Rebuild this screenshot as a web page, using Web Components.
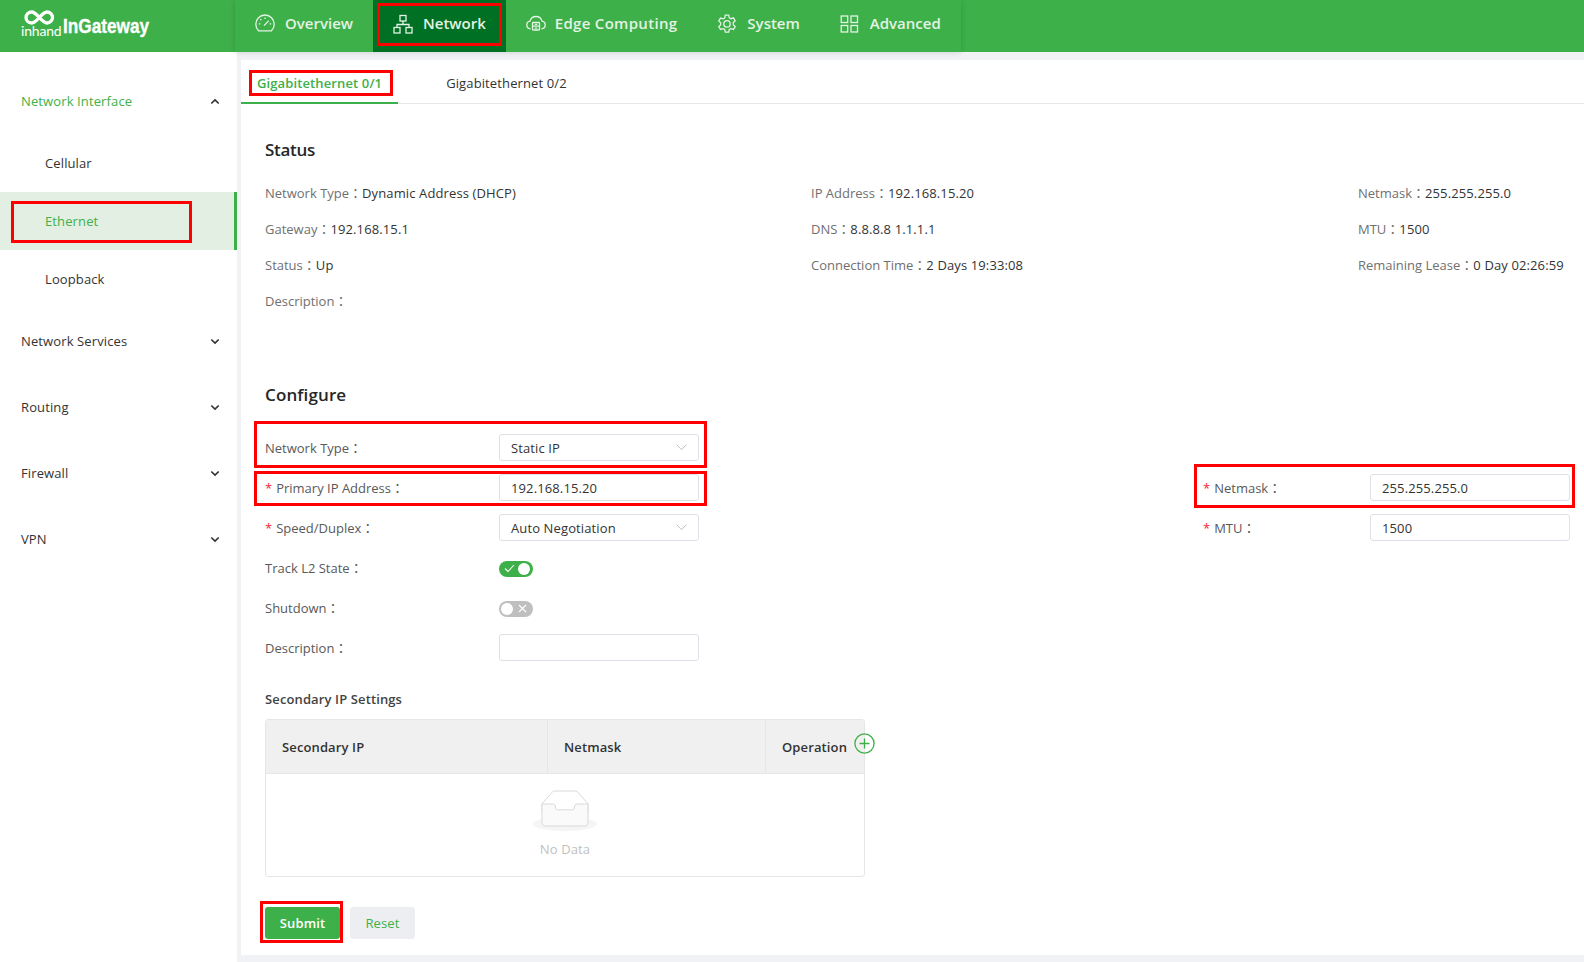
<!DOCTYPE html>
<html>
<head>
<meta charset="utf-8">
<title>InGateway</title>
<style>
  html, body { margin: 0; padding: 0; }
  body {
    width: 1584px; height: 962px; overflow: hidden; position: relative;
    background: #f0f2f5; color: #333;
    font: 13px "Open Sans", "Noto Sans CJK TC", sans-serif;
    letter-spacing: .12px;
    --green: #3eb049;
  }
  .main { display: grid; grid-template-columns: 237px 1fr; column-gap: 4px; height: 910px; }
</style>
</head>
<body>
<app-header>
  <nav-item icon="gauge">Overview</nav-item>
  <nav-item icon="network" active>Network</nav-item>
  <nav-item icon="edge" style="--nav-gap: 9px; --nav-track: .3px">Edge Computing</nav-item>
  <nav-item icon="gear">System</nav-item>
  <nav-item icon="grid">Advanced</nav-item>
</app-header>

<div class="main">
  <side-menu>
    <side-group open>Network Interface</side-group>
    <side-item>Cellular</side-item>
    <side-item active>Ethernet</side-item>
    <side-item>Loopback</side-item>
    <side-group>Network Services</side-group>
    <side-group>Routing</side-group>
    <side-group>Firewall</side-group>
    <side-group>VPN</side-group>
  </side-menu>

  <content-panel>
    <tab-bar>
      <tab-item active>Gigabitethernet 0/1</tab-item>
      <tab-item>Gigabitethernet 0/2</tab-item>
    </tab-bar>

    <section-title top="34" style="letter-spacing: -.3px">Status</section-title>
    <status-grid>
      <status-cell label="Network Type">Dynamic Address (DHCP)</status-cell>
      <status-cell label="IP Address">192.168.15.20</status-cell>
      <status-cell label="Netmask">255.255.255.0</status-cell>
      <status-cell label="Gateway">192.168.15.1</status-cell>
      <status-cell label="DNS">8.8.8.8 1.1.1.1</status-cell>
      <status-cell label="MTU">1500</status-cell>
      <status-cell label="Status">Up</status-cell>
      <status-cell label="Connection Time">2 Days 19:33:08</status-cell>
      <status-cell label="Remaining Lease">0 Day 02:26:59</status-cell>
      <status-cell label="Description"></status-cell>
    </status-grid>

    <section-title top="64">Configure</section-title>
    <form-grid>
      <form-row label="Network Type" width="234"><select-box>Static IP</select-box></form-row>
      <form-row></form-row>
      <form-row label="Primary IP Address" width="234" required><text-box>192.168.15.20</text-box></form-row>
      <form-row label="Netmask" width="167" required><text-box>255.255.255.0</text-box></form-row>
      <form-row label="Speed/Duplex" width="234" required><select-box>Auto Negotiation</select-box></form-row>
      <form-row label="MTU" width="167" required><text-box>1500</text-box></form-row>
      <form-row label="Track L2 State" width="234"><toggle-switch on></toggle-switch></form-row>
      <form-row></form-row>
      <form-row label="Shutdown" width="234"><toggle-switch></toggle-switch></form-row>
      <form-row></form-row>
      <form-row label="Description" width="234"><text-box></text-box></form-row>
      <form-row></form-row>
    </form-grid>

    <secondary-table></secondary-table>

    <button-row>
      <action-button primary>Submit</action-button>
      <action-button>Reset</action-button>
    </button-row>
  </content-panel>
</div>

<red-mark x="377" y="3" w="125" h="43"></red-mark>
<red-mark x="249" y="70" w="144" h="26"></red-mark>
<red-mark x="11" y="201" w="181" h="42"></red-mark>
<red-mark x="254" y="421" w="453" h="47"></red-mark>
<red-mark x="254" y="471" w="453" h="35"></red-mark>
<red-mark x="1194" y="464" w="381" h="44"></red-mark>
<red-mark x="260" y="901" w="83" h="42"></red-mark>

<script>
const NAV_ICONS = {
  gauge: `<path d="M3.600 16.800a9.200 9.200 0 1 1 12.800 0z"/><path d="M9 11.600l4.800-5M3.800 9.800h1.600M10 3.400V5M5.300 5.100l1.100 1.100M14.600 9.800h1.600"/>`,
  network: `<rect x="7" y="1.500" width="6" height="5.500"/><rect x="1" y="13.500" width="6" height="5.500"/><rect x="13" y="13.500" width="6" height="5.500"/><path d="M10 7v3.500M4 13.500v-3h12v3"/>`,
  edge: `<path d="M4.600 14.800C2.300 14.600.8 13 .8 11c0-2 1.400-3.500 3.200-3.800C4.800 4.200 7.200 2.500 10 2.500s5.200 1.700 6 4.700c1.800.3 3.200 1.800 3.200 3.800s-1.500 3.600-3.800 3.800"/><rect x="6.500" y="8.500" width="7" height="7.500" rx=".8"/><path d="M6.500 12.200h7M8.800 10.300h2.400M8.800 14.100h2.400"/>`,
  gear: `<path d="M8.300 1.200h3.400l.6 2.600 1.700.9 2.500-.8 1.700 2.900-1.900 1.800v2.100l1.900 1.800-1.700 2.900-2.500-.8-1.700.9-.6 2.600H8.300l-.6-2.600-1.700-.9-2.500.8-1.700-2.900 1.900-1.800V8.800L1.800 7l1.700-2.900 2.500.8 1.700-.9z"/><circle cx="10" cy="9.900" r="3.200"/>`,
  grid: `<rect x="1.200" y="2" width="6.500" height="6.500"/><rect x="11" y="2" width="6.500" height="6.500"/><rect x="1.200" y="11.500" width="6.500" height="6.500"/><rect x="11" y="11.500" width="6.500" height="6.500"/>`
};

class AppHeader extends HTMLElement {
  constructor() {
    super();
    this.attachShadow({ mode: 'open' }).innerHTML = `
      <style>
        :host { display: flex; height: 52px; background: var(--green); position: relative; z-index: 2; letter-spacing: 0; }
        .logo { width: 235px; box-sizing: border-box; padding: 8px 0 0 21px; display: flex; color: #fff; }
        .mark { position: relative; width: 42px; height: 40px; }
        .mark svg { position: absolute; left: 2px; top: 2px; }
        .small { position: absolute; left: 0; top: 13px; font: 400 14px/20px Lato, sans-serif; letter-spacing: -.2px; }
        .name { margin: 5px 0 0 0; font: 700 21px/26px "Liberation Sans", sans-serif; transform: scaleX(.82); transform-origin: 0 50%; -webkit-text-stroke: .35px #fff; }
        nav { display: flex; box-shadow: 0 0 6px rgba(0, 0, 0, .16); height: 52px; }
      </style>
      <div class="logo">
        <div class="mark">
          <svg width="33" height="15" viewBox="0 0 31 15" fill="none" stroke="#fff" stroke-width="3.300">
            <path d="M2 7.500c0-3 2.500-5.500 5.700-5.500 5.300 0 9.800 11 15.300 11 3 0 5.500-2.500 5.500-5.500S26.200 2 23 2c-5.500 0-10 11-15.300 11C4.500 13 2 10.500 2 7.500z"/>
          </svg>
          <span class="small">inhand</span>
        </div>
        <span class="name">InGateway</span>
      </div>
      <nav><slot></slot></nav>`;
  }
}

class NavItem extends HTMLElement {
  connectedCallback() {
    const icon = NAV_ICONS[this.getAttribute('icon')] || '';
    this.attachShadow({ mode: 'open' }).innerHTML = `
      <style>
        :host { display: flex; align-items: center; gap: var(--nav-gap, 10px); padding: 0 20px; height: 52px; color: #e3f3e4; font-weight: 600; font-size: 15px; letter-spacing: var(--nav-track, 0); }
        :host([active]) { background: #007025; }
        svg { display: block; margin-top: -5px; }
        span { margin-top: -6px; }
      </style>
      <svg width="20" height="20" viewBox="0 0 20 20" fill="none" stroke="currentColor" stroke-width="1.3">${icon}</svg>
      <span><slot></slot></span>`;
  }
}

class SideMenu extends HTMLElement {
  constructor() {
    super();
    this.attachShadow({ mode: 'open' }).innerHTML = `
      <style>:host { display: block; background: #fff; padding-top: 16px; height: 910px; box-sizing: border-box; }</style>
      <slot></slot>`;
  }
}

class SideGroup extends HTMLElement {
  connectedCallback() {
    const open = this.hasAttribute('open');
    this.attachShadow({ mode: 'open' }).innerHTML = `
      <style>
        :host { display: flex; align-items: center; justify-content: space-between; height: 66px; padding: 0 17px 0 21px; color: #333; }
        :host([open]) { color: var(--green); }
        svg { display: block; ${open ? 'transform: rotate(180deg);' : ''} }
      </style>
      <span><slot></slot></span>
      <svg width="10" height="7" viewBox="0 0 10 7" fill="none" stroke="#333" stroke-width="1.7"><path d="M1.300 1.500L5 5l3.700-3.500"/></svg>`;
  }
}

class SideItem extends HTMLElement {
  constructor() {
    super();
    this.attachShadow({ mode: 'open' }).innerHTML = `
      <style>
        :host { display: flex; align-items: center; height: 58px; padding-left: 45px; color: #333; box-sizing: border-box; }
        :host([active]) { background: #e3efe2; color: var(--green); border-right: 3px solid var(--green); }
      </style>
      <slot></slot>`;
  }
}

class ContentPanel extends HTMLElement {
  constructor() {
    super();
    this.attachShadow({ mode: 'open' }).innerHTML = `
      <style>:host { display: block; background: #fff; margin-top: 8px; height: 895px; overflow: hidden; }</style>
      <slot></slot>`;
  }
}

class TabBar extends HTMLElement {
  constructor() {
    super();
    this.attachShadow({ mode: 'open' }).innerHTML = `
      <style>:host { display: flex; gap: 32px; height: 44px; box-sizing: border-box; border-bottom: 1px solid #e6e6e6; }</style>
      <slot></slot>`;
  }
}

class TabItem extends HTMLElement {
  constructor() {
    super();
    this.attachShadow({ mode: 'open' }).innerHTML = `
      <style>
        :host { display: flex; align-items: center; padding: 3px 16px 2px; height: 44px; box-sizing: border-box; color: #333; }
        :host([active]) { color: var(--green); font-weight: 600; border-bottom: 2px solid var(--green); padding-bottom: 0; }
      </style>
      <slot></slot>`;
  }
}

class SectionTitle extends HTMLElement {
  connectedCallback() {
    this.attachShadow({ mode: 'open' }).innerHTML = `
      <style>:host { display: block; margin: ${this.getAttribute('top') || 0}px 0 0 24px; font-size: 17px; font-weight: 600; line-height: 24px; color: #262626; }</style>
      <slot></slot>`;
  }
}

class StatusGrid extends HTMLElement {
  constructor() {
    super();
    this.attachShadow({ mode: 'open' }).innerHTML = `
      <style>:host { display: grid; grid-template-columns: 546px 547px 1fr; grid-auto-rows: 36px; margin: 13px 0 0 24px; }</style>
      <slot></slot>`;
  }
}

class StatusCell extends HTMLElement {
  connectedCallback() {
    this.attachShadow({ mode: 'open' }).innerHTML = `
      <style>
        :host { display: block; line-height: 36px; height: 36px; white-space: nowrap; color: #333; }
        b { font-weight: 400; color: #707070; letter-spacing: 0; }
      </style>
      <b>${this.getAttribute('label')}：</b><slot></slot>`;
  }
}

class FormGrid extends HTMLElement {
  constructor() {
    super();
    this.attachShadow({ mode: 'open' }).innerHTML = `
      <style>:host { display: grid; grid-template-columns: 938px 1fr; grid-auto-rows: 40px; margin: 20px 0 0 24px; }</style>
      <slot></slot>`;
  }
}

class FormRow extends HTMLElement {
  connectedCallback() {
    const label = this.getAttribute('label');
    const star = this.hasAttribute('required') ? '<i>*</i>' : '';
    this.attachShadow({ mode: 'open' }).innerHTML = `
      <style>
        :host { display: flex; align-items: center; color: #595959; }
        label { display: block; flex: none; width: ${this.getAttribute('width') || 0}px; white-space: nowrap; line-height: 20px; height: 20px; margin-top: 2px; letter-spacing: 0; }
        i { color: #f5222d; font-style: normal; margin-right: 4px; }
      </style>
      ${label ? `<label>${star}${label}：</label>` : ''}<slot></slot>`;
  }
}

const FIELD_CSS = `
  :host { display: flex; align-items: center; justify-content: space-between; width: 200px; height: 27px; box-sizing: border-box;
    border: 1px solid #dfe1e8; border-radius: 3px; padding: 1px 11px 0; color: #333; background: #fff; }`;

class TextBox extends HTMLElement {
  constructor() {
    super();
    this.attachShadow({ mode: 'open' }).innerHTML = `<style>${FIELD_CSS}</style><slot></slot>`;
  }
}

class SelectBox extends HTMLElement {
  constructor() {
    super();
    this.attachShadow({ mode: 'open' }).innerHTML = `
      <style>${FIELD_CSS}</style>
      <span><slot></slot></span>
      <svg width="11" height="7" viewBox="0 0 11 7" fill="none" stroke="#bfbfbf" stroke-width="1"><path d="M.7.700l4.800 5 4.800-5"/></svg>`;
  }
}

class ToggleSwitch extends HTMLElement {
  connectedCallback() {
    const on = this.hasAttribute('on');
    const glyph = on
      ? '<svg width="11" height="9" viewBox="0 0 11 9" fill="none" stroke="#fff" stroke-width="1.100"><path d="M1 4.500l3 3 6-6.500"/></svg>'
      : '<svg width="9" height="9" viewBox="0 0 9 9" fill="none" stroke="#fff" stroke-width="1.100"><path d="M1 1l7 7M8 1L1 8"/></svg>';
    this.attachShadow({ mode: 'open' }).innerHTML = `
      <style>
        :host { display: flex; align-items: center; gap: 3px; width: 34px; height: 16px; margin-top: 3px; border-radius: 8px; box-sizing: border-box; padding: 0 2px 0 5px; background: var(--green); }
        :host(:not([on])) { background: #bfbfbf; flex-direction: row-reverse; justify-content: flex-end; padding: 0 4px 0 2px; gap: 5px; }
        span { width: 12px; height: 12px; border-radius: 50%; background: #fff; flex: none; }
        svg { display: block; flex: none; }
      </style>
      ${glyph}<span></span>`;
  }
}

class SecondaryTable extends HTMLElement {
  constructor() {
    super();
    this.attachShadow({ mode: 'open' }).innerHTML = `
      <style>
        :host { display: block; margin: 22px 0 0 24px; }
        h4 { margin: 0; font-size: 13px; font-weight: 600; line-height: 20px; color: #434343; }
        .table { position: relative; width: 600px; height: 158px; margin-top: 10px; box-sizing: border-box; border: 1px solid #e6e6e6; border-radius: 3px; }
        .head { display: grid; grid-template-columns: 281px 218px 1fr; height: 53px; background: #f0f0f0; border-bottom: 1px solid #e6e6e6; font-weight: 600; color: #333; box-sizing: content-box; }
        .head div { display: flex; align-items: center; padding-left: 16px; border-left: 1px solid #e6e6e6; }
        .head div:first-child { border-left: 0; padding-left: 16px; }
        .plus { position: absolute; right: -11px; top: 13px; display: block; }
        .empty { display: flex; flex-direction: column; align-items: center; padding-top: 16px; color: #bfbfbf; }
        .empty svg { display: block; }
        .empty span { margin-top: 8px; line-height: 20px; }
      </style>
      <h4>Secondary IP Settings</h4>
      <div class="table">
        <div class="head"><div>Secondary IP</div><div>Netmask</div><div>Operation</div></div>
        <svg class="plus" width="21" height="21" viewBox="0 0 21 21" fill="none" stroke="#3eb049" stroke-width="1.300"><circle cx="10.500" cy="10.500" r="9.600"/><path d="M10.500 5.500v10M5.500 10.500h10"/></svg>
        <div class="empty">
          <svg width="64" height="41" viewBox="0 0 64 41"><g transform="translate(0 1)" fill="none" fill-rule="evenodd"><ellipse fill="#f5f5f5" cx="32" cy="33" rx="32" ry="7"/><g fill-rule="nonzero" stroke="#d9d9d9"><path d="M55 12.760L44.854 1.258C44.367.474 43.656 0 42.907 0H21.093c-.749 0-1.460.474-1.947 1.257L9 12.761V22h46v-9.240z"/><path d="M41.613 15.931c0-1.605.994-2.930 2.227-2.931H55v18.137C55 33.260 53.680 35 52.050 35h-40.100C10.320 35 9 33.259 9 31.137V13h11.160c1.233 0 2.227 1.323 2.227 2.928v.022c0 1.605 1.005 2.901 2.237 2.901h14.752c1.232 0 2.237-1.308 2.237-2.913v-.007z" fill="#fafafa"/></g></g></svg>
          <span>No Data</span>
        </div>
      </div>`;
  }
}

class ButtonRow extends HTMLElement {
  constructor() {
    super();
    this.attachShadow({ mode: 'open' }).innerHTML = `
      <style>:host { display: flex; gap: 10px; margin: 30px 0 0 24px; }</style>
      <slot></slot>`;
  }
}

class ActionButton extends HTMLElement {
  constructor() {
    super();
    this.attachShadow({ mode: 'open' }).innerHTML = `
      <style>
        :host { display: flex; align-items: center; justify-content: center; width: 65px; height: 32px; border-radius: 3px; background: #eceef1; color: var(--green); font-weight: 500; }
        :host([primary]) { width: 75px; background: var(--green); color: #fff; font-weight: 600; }
      </style>
      <slot></slot>`;
  }
}

// red annotation boxes drawn over the screenshot
class RedMark extends HTMLElement {
  connectedCallback() {
    const [x, y, w, h] = ['x', 'y', 'w', 'h'].map(a => this.getAttribute(a));
    this.attachShadow({ mode: 'open' }).innerHTML = `
      <style>:host { display: block; position: absolute; z-index: 5; left: ${x}px; top: ${y}px; width: ${w}px; height: ${h}px; box-sizing: border-box; border: 3px solid #f00; }</style>`;
  }
}

customElements.define('app-header', AppHeader);
customElements.define('nav-item', NavItem);
customElements.define('side-menu', SideMenu);
customElements.define('side-group', SideGroup);
customElements.define('side-item', SideItem);
customElements.define('content-panel', ContentPanel);
customElements.define('tab-bar', TabBar);
customElements.define('tab-item', TabItem);
customElements.define('section-title', SectionTitle);
customElements.define('status-grid', StatusGrid);
customElements.define('status-cell', StatusCell);
customElements.define('form-grid', FormGrid);
customElements.define('form-row', FormRow);
customElements.define('text-box', TextBox);
customElements.define('select-box', SelectBox);
customElements.define('toggle-switch', ToggleSwitch);
customElements.define('secondary-table', SecondaryTable);
customElements.define('button-row', ButtonRow);
customElements.define('action-button', ActionButton);
customElements.define('red-mark', RedMark);
</script>
</body>
</html>
